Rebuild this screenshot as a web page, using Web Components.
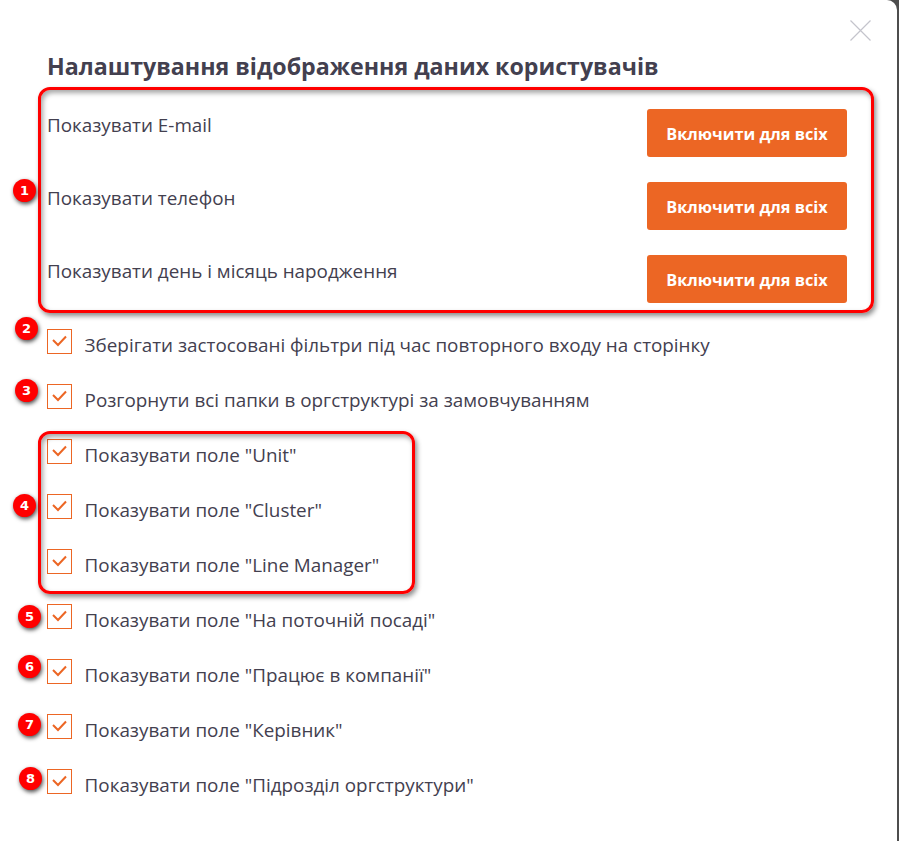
<!DOCTYPE html>
<html lang="uk">
  <head>
    <meta charset="UTF-8" />
    <title>Налаштування відображення даних користувачів</title>
    <style>
      html, body { margin: 0; height: 100%; background: #fff; }
      body { font-family: "Open Sans", "Noto Sans", sans-serif; color: #43404f; overflow: hidden; }
    </style>
  </head>
  <body>
    <settings-modal heading="Налаштування відображення даних користувачів">
      <toggle-row>Показувати E-mail</toggle-row>
      <toggle-row>Показувати телефон</toggle-row>
      <toggle-row>Показувати день і місяць народження</toggle-row>
      <check-row slot="checks">Зберігати застосовані фільтри під час повторного входу на сторінку</check-row>
      <check-row slot="checks">Розгорнути всі папки в оргструктурі за замовчуванням</check-row>
      <check-row slot="checks">Показувати поле "Unit"</check-row>
      <check-row slot="checks">Показувати поле "Cluster"</check-row>
      <check-row slot="checks">Показувати поле "Line Manager"</check-row>
      <check-row slot="checks">Показувати поле "На поточній посаді"</check-row>
      <check-row slot="checks">Показувати поле "Працює в компанії"</check-row>
      <check-row slot="checks">Показувати поле "Керівник"</check-row>
      <check-row slot="checks">Показувати поле "Підрозділ оргструктури"</check-row>

      <!-- червоні позначки поверх скріншота -->
      <note-frame slot="notes" style="left:38px;top:87px;width:836px;height:226px"></note-frame>
      <note-frame slot="notes" style="left:38px;top:431px;width:377px;height:163px"></note-frame>
      <note-badge slot="notes" style="left:13px;top:179px">1</note-badge>
      <note-badge slot="notes" style="left:15px;top:317px">2</note-badge>
      <note-badge slot="notes" style="left:15px;top:379px">3</note-badge>
      <note-badge slot="notes" style="left:13px;top:494px">4</note-badge>
      <note-badge slot="notes" style="left:18px;top:605px">5</note-badge>
      <note-badge slot="notes" style="left:18px;top:655px">6</note-badge>
      <note-badge slot="notes" style="left:18px;top:713px">7</note-badge>
      <note-badge slot="notes" style="left:19px;top:767px">8</note-badge>
    </settings-modal>

    <script>
      customElements.define(
        "settings-modal",
        class extends HTMLElement {
          constructor() {
            super();
            const shadow = this.attachShadow({ mode: "open" });
            shadow.innerHTML = `
    <style>
      :host {
        display: block;
        position: relative;
        height: 841px;
        box-sizing: border-box;
        background: #4d4d4d;
      }
      .panel {
        box-sizing: border-box;
        height: 841px;
        width: 897px;
        padding: 51px 50px 0 47px;
        background: #fff;
        border-top-right-radius: 10px;
      }
      h1 {
        margin: 0 0 28px;
        font-size: 23.2px;
        line-height: 30px;
        font-weight: 700;
        white-space: nowrap;
      }
      .toggles { display: flex; flex-direction: column; gap: 25px; }
      .checks { display: flex; flex-direction: column; gap: 30px; margin-top: 26px; }
      .close { position: absolute; left: 850px; top: 20px; width: 21px; height: 21px; }
    </style>
    <div class="panel">
      <h1></h1>
      <div class="toggles"><slot></slot></div>
      <div class="checks"><slot name="checks"></slot></div>
    </div>
    <svg class="close" viewBox="0 0 21 21" fill="none" stroke="#c4c4cc" stroke-width="1.2">
      <path d="M.5.5l20 20M20.5.5l-20 20" />
    </svg>
    <slot name="notes"></slot>
    `;
            shadow.querySelector("h1").textContent = this.getAttribute("heading");
          }
        }
      );

      customElements.define(
        "toggle-row",
        class extends HTMLElement {
          constructor() {
            super();
            const shadow = this.attachShadow({ mode: "open" });
            shadow.innerHTML = `
    <style>
      :host {
        display: flex;
        justify-content: space-between;
        align-items: flex-start;
        font-size: 18.85px;
        line-height: 24px;
      }
      .label { padding-top: 4px; }
      button {
        width: 200px;
        height: 48px;
        padding: 2px 0 0;
        border: 0;
        border-radius: 3px;
        background: #ec6624;
        color: #fff;
        font: 700 16.3px "Open Sans", "Noto Sans", sans-serif;
      }
    </style>
    <span class="label"><slot></slot></span>
    <button>Включити для всіх</button>
    `;
          }
        }
      );

      customElements.define(
        "check-row",
        class extends HTMLElement {
          constructor() {
            super();
            const shadow = this.attachShadow({ mode: "open" });
            shadow.innerHTML = `
    <style>
      :host {
        display: flex;
        gap: 12.6px;
        height: 25px;
        font-size: 18.85px;
        line-height: 24px;
      }
      .box {
        box-sizing: border-box;
        flex: none;
        width: 25px;
        height: 25px;
        border: 1px solid #ec6624;
      }
      svg { display: block; }
      .label { padding-top: 4px; white-space: nowrap; }
    </style>
    <span class="box">
      <svg width="23" height="23" viewBox="0 0 23 23" fill="none" stroke="#ec6624" stroke-width="2">
        <path d="M5 10l5 5 8-8.500" />
      </svg>
    </span>
    <span class="label"><slot></slot></span>
    `;
          }
        }
      );

      customElements.define(
        "note-frame",
        class extends HTMLElement {
          constructor() {
            super();
            const shadow = this.attachShadow({ mode: "open" });
            shadow.innerHTML = `
    <style>
      :host {
        display: block;
        position: absolute;
        box-sizing: border-box;
        border: 3px solid #f00;
        border-radius: 12px;
        box-shadow: 2px 3px 5px rgba(0, 0, 0, 0.45), inset 2px 3px 5px rgba(0, 0, 0, 0.35);
      }
    </style>
    `;
          }
        }
      );

      customElements.define(
        "note-badge",
        class extends HTMLElement {
          constructor() {
            super();
            const shadow = this.attachShadow({ mode: "open" });
            shadow.innerHTML = `
    <style>
      :host {
        display: flex;
        position: absolute;
        align-items: center;
        justify-content: center;
        width: 23px;
        height: 23px;
        border-radius: 50%;
        background: #f00;
        color: #fff;
        font: 700 13px "DejaVu Sans", sans-serif;
        box-shadow: 1px 2px 4px rgba(0, 0, 0, 0.7);
      }
    </style>
    <slot></slot>
    `;
          }
        }
      );
    </script>
  </body>
</html>
